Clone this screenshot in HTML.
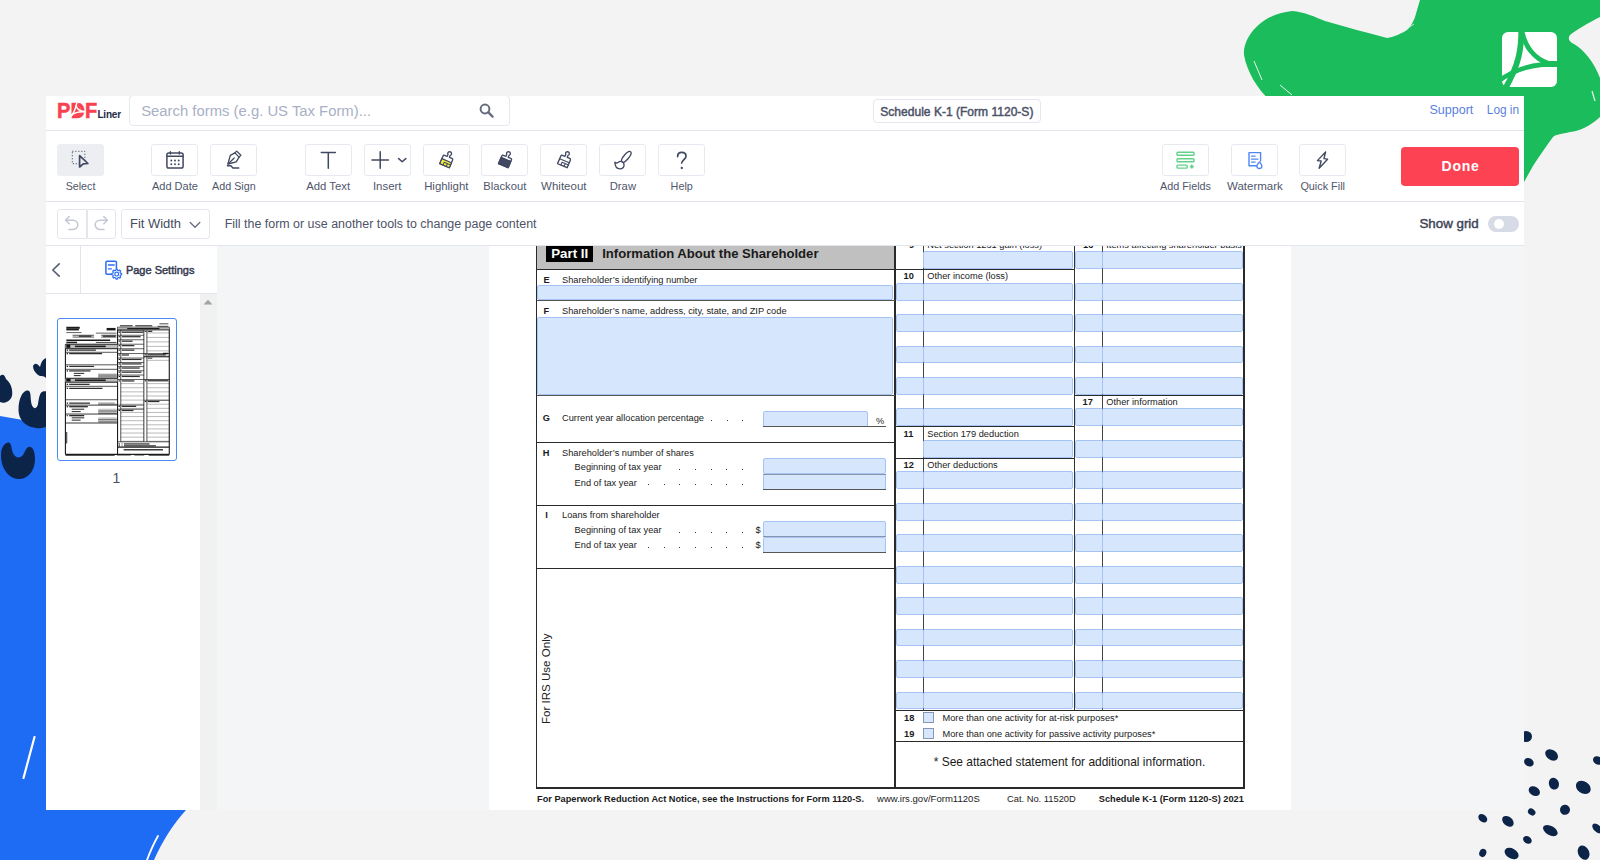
<!DOCTYPE html><html lang="en"><head><meta charset="utf-8"><title>Schedule K-1 (Form 1120-S) - PDFLiner</title><style>
*{box-sizing:border-box}
html,body{margin:0;padding:0}
body{width:1600px;height:860px;overflow:hidden;background:#f3f3f3;position:relative;font-family:"Liberation Sans",Arial,sans-serif;color:#3e4358}
.abs,.abs *{position:absolute}
.a{position:absolute}
#decor{position:absolute;left:0;top:0;width:1600px;height:860px}
#panel{position:absolute;left:46px;top:96px;width:1478px;height:714px;background:#fff;overflow:hidden}
.hl{position:absolute;height:1px;background:#e2e5ee}
.btn{position:absolute;top:144px;width:47px;height:32px;border:1px solid #e7e9f0;border-radius:3px;background:#fff}
.btn.sel{background:#eceef2;border-color:#eceef2}
.lbl{position:absolute;top:179px;width:80px;margin-left:-16.5px;text-align:center;font-size:11.1px;line-height:14px;color:#50566b;white-space:nowrap}
.sbtn{position:absolute;top:209px;height:30px;border:1px solid #e4e6ee;border-radius:3px;background:#fff}
svg{position:absolute;overflow:visible}
.t{position:absolute;white-space:nowrap;line-height:1}
.f{position:absolute;background:#d6e6fc;border:1px solid #a6c3f6;border-radius:2px}
.pl{position:absolute;background:#2a2a2a}
.pt{position:absolute;white-space:nowrap;line-height:1;color:#1a1a1a;font-size:9.25px}
.pb{font-weight:700}
.dot{position:absolute;width:1px;height:1px;background:#333}
</style></head><body>
<svg id="decor" width="1600" height="860" viewBox="0 0 1600 860">
<path fill="#1abc5b" d="M1420 0 L1600 0 L1600 17 C1588 23 1576 30 1570 35 C1567 39 1570 42 1574 44 C1584 50 1594 62 1600 78 L1600 117 C1590 126 1580 131 1570 132 C1562 134 1556 134 1553 137 C1545 148 1538 158 1533 166 L1524 182 L1270 182 L1270 100 C1258 90 1247 72 1244 55 C1243 36 1262 14 1292 11 C1305 12 1315 17 1325 21 C1346 27 1368 33 1387 38 C1395 37 1402 33 1407 30 C1412 25 1414 20 1415 17 Z"/>
<path d="M1254 61 L1262 80" stroke="#e9f7ee" stroke-width="1" fill="none"/>
<path d="M1280 85 L1292 95" stroke="#e9f7ee" stroke-width="1" fill="none"/>
<path d="M1592 91 L1595 101" stroke="#e9f7ee" stroke-width="1.2" fill="none"/>
<path d="M1405 30 L1414 24" stroke="#e9f7ee" stroke-width="0.8" fill="none"/>
<g><rect x="1502" y="32" width="55" height="55" rx="6" fill="#fff"/><path d="M1521.3 29 C1521.5 48 1519.5 64 1504.5 90" stroke="#1abc5b" stroke-width="5.8" fill="none"/><path d="M1522 32 C1525 45 1533 58 1548 63.3 L1560 63.8" stroke="#1abc5b" stroke-width="5" fill="none"/><path d="M1499 80.8 C1512 71 1527 66.2 1542 64.6 L1560 64.6" stroke="#1abc5b" stroke-width="4.6" fill="none"/></g>
<path fill="#1e6bf4" d="M0 416 L46 424 L46 810 L186 810 C173 824 162 842 154 860 L0 860 Z"/>
<path d="M34.5 737 L23.5 778" stroke="#fff" stroke-width="2.2" stroke-linecap="round" fill="none"/>
<path d="M158 836 C154 843 150 852 147 860" stroke="#fff" stroke-width="1.8" stroke-linecap="round" fill="none"/>
<path fill="#0c2448" d="M1 455 C1 447 5 442 9 442.5 C11.5 443 11 448 13 453 C15 458 20 459 23 455 C25 452 26 447.5 29 446.8 C33 446.5 35 452 35 459 C35 471 28 479 19 479 C9 479 1 469 1 455 Z"/>
<path fill="#0c2448" d="M18.5 410 C18.5 398 23 390 28 390.5 C31.5 391 30 398 31.5 404 C33 409.5 37 409.5 38 404 C39 398 39.5 392.5 43 391.5 C46 391 50 392 50 392 L50 424 C46 428 40 429 36 428 C26 427 18.5 420 18.5 410 Z"/>
<path fill="#0c2448" d="M0 376 C3 373 5 376 6 379 C11 383 13 390 12 396 C10 402 4 404 0 402 Z"/>
<path fill="#0c2448" d="M33 366 C35 362 38 364 40 367 C41 362 43 359 46 358 L50 358 L50 378 L46 378 C44 376 42 376 40 376 C36 374 33 370 33 366 Z"/>
<ellipse cx="1526" cy="736.5" rx="6" ry="5.5" fill="#0c2448" transform="rotate(0 1526 736.5)"/>
<ellipse cx="1551.6" cy="754.9" rx="7" ry="5" fill="#0c2448" transform="rotate(35 1551.6 754.9)"/>
<ellipse cx="1528.9" cy="762.3" rx="5" ry="4" fill="#0c2448" transform="rotate(30 1528.9 762.3)"/>
<ellipse cx="1597.8" cy="760.5" rx="5" ry="4" fill="#0c2448" transform="rotate(30 1597.8 760.5)"/>
<ellipse cx="1553.9" cy="783.7" rx="5" ry="6" fill="#0c2448" transform="rotate(-20 1553.9 783.7)"/>
<ellipse cx="1583.3" cy="787.4" rx="8" ry="6" fill="#0c2448" transform="rotate(35 1583.3 787.4)"/>
<ellipse cx="1534.3" cy="791.2" rx="6" ry="4.5" fill="#0c2448" transform="rotate(30 1534.3 791.2)"/>
<ellipse cx="1565" cy="809.8" rx="5" ry="5" fill="#0c2448" transform="rotate(40 1565 809.8)"/>
<ellipse cx="1531.7" cy="812" rx="4" ry="3.2" fill="#0c2448" transform="rotate(35 1531.7 812)"/>
<ellipse cx="1482.8" cy="818.3" rx="5" ry="3.6" fill="#0c2448" transform="rotate(40 1482.8 818.3)"/>
<ellipse cx="1507.9" cy="821.3" rx="6.5" ry="4.5" fill="#0c2448" transform="rotate(40 1507.9 821.3)"/>
<ellipse cx="1550.3" cy="830.6" rx="8" ry="4.6" fill="#0c2448" transform="rotate(30 1550.3 830.6)"/>
<ellipse cx="1597.2" cy="828.4" rx="6" ry="3.5" fill="#0c2448" transform="rotate(45 1597.2 828.4)"/>
<ellipse cx="1527.4" cy="839.9" rx="4.6" ry="3.6" fill="#0c2448" transform="rotate(35 1527.4 839.9)"/>
<ellipse cx="1482.8" cy="852.9" rx="3.5" ry="4.2" fill="#0c2448" transform="rotate(20 1482.8 852.9)"/>
<ellipse cx="1511.6" cy="853.5" rx="7.5" ry="5" fill="#0c2448" transform="rotate(30 1511.6 853.5)"/>
<ellipse cx="1583.6" cy="852.6" rx="5.5" ry="7.5" fill="#0c2448" transform="rotate(-25 1583.6 852.6)"/>
</svg>
<div id="panel"><div class="abs" style="left:-46px;top:-96px;width:1600px;height:860px">
<div class="hl" style="left:46px;top:130px;width:1478px"></div>
<div class="hl" style="left:46px;top:201px;width:1478px"></div>
<div class="hl" style="left:46px;top:245px;width:1478px"></div>
<div class="t" style="left:56.6px;top:99.6px;font-size:21.6px;font-weight:700;color:#f8414f;-webkit-text-stroke:0.55px #f8414f;letter-spacing:0.1px;transform:scaleX(0.925);transform-origin:0 0">PDF</div>
<svg style="left:0;top:0" width="200" height="130" viewBox="0 0 200 130"><path d="M73 105.5 H77.5 Q81 106.5 81 110.5 Q81 115 77.5 115.6 H73 Z" fill="#f8414f"/><path d="M76.9 102.5 C76 108 73.5 113.5 70 118.2" stroke="#fff" stroke-width="1.5" fill="none"/><path d="M75.6 105.6 C77.2 108.8 80.6 111.4 85 111.6" stroke="#fff" stroke-width="1.5" fill="none"/><path d="M70.8 115.3 C74.5 112.8 79.6 111.5 84.4 111.9" stroke="#fff" stroke-width="1.5" fill="none"/></svg>
<div class="t" style="left:97.4px;top:110.2px;font-size:10px;font-weight:700;color:#232b47;letter-spacing:-0.2px">Liner</div>
<div class="a" style="left:129px;top:95px;width:381px;height:31px;border:1px solid #e4e7f0;border-radius:4px;background:#fff"></div>
<div class="t" style="left:141.2px;top:104.2px;font-size:14.85px;color:#a9b0c6">Search forms (e.g. US Tax Form)...</div>
<svg style="left:479px;top:103px" width="15" height="15" viewBox="0 0 15 15"><circle cx="6" cy="6" r="4.4" fill="none" stroke="#646b7e" stroke-width="2"/><path d="M9.4 9.4 L13.6 13.6" stroke="#646b7e" stroke-width="2.2" stroke-linecap="round"/></svg>
<div class="a" style="left:873px;top:99px;width:168px;height:24px;border:1px solid #e4e7f0;border-radius:4px;background:#fff"></div>
<div class="t" style="left:880.3px;top:105.9px;font-size:12.05px;-webkit-text-stroke:0.45px #4b5168;color:#4b5168">Schedule K-1 (Form 1120-S)</div>
<div class="t" style="left:1429.5px;top:104px;font-size:12.5px;color:#5a7fdb">Support</div>
<div class="t" style="left:1486.8px;top:104.55px;font-size:11.85px;color:#5a7fdb">Log in</div>
<div class="btn sel" style="left:57px"></div><div class="lbl" style="left:57px;font-size:10.7px">Select</div>
<div class="btn" style="left:151.4px"></div><div class="lbl" style="left:151.4px;font-size:11.03px">Add Date</div>
<div class="btn" style="left:210.4px"></div><div class="lbl" style="left:210.4px;font-size:10.75px">Add Sign</div>
<div class="btn" style="left:304.7px"></div><div class="lbl" style="left:304.7px;font-size:11.3px">Add Text</div>
<div class="btn" style="left:363.7px"></div><div class="lbl" style="left:363.7px;font-size:11.4px">Insert</div>
<div class="btn" style="left:422.8px"></div><div class="lbl" style="left:422.8px;font-size:11.4px">Highlight</div>
<div class="btn" style="left:481.3px"></div><div class="lbl" style="left:481.3px;font-size:11.2px">Blackout</div>
<div class="btn" style="left:540.3px"></div><div class="lbl" style="left:540.3px;font-size:11.5px">Whiteout</div>
<div class="btn" style="left:599.4px"></div><div class="lbl" style="left:599.4px;font-size:11.25px">Draw</div>
<div class="btn" style="left:658.2px"></div><div class="lbl" style="left:658.2px;font-size:10.8px">Help</div>
<div class="btn" style="left:1162px"></div><div class="lbl" style="left:1162px;font-size:10.8px">Add Fields</div>
<div class="btn" style="left:1231.4px"></div><div class="lbl" style="left:1231.4px;font-size:11.5px">Watermark</div>
<div class="btn" style="left:1299.2px"></div><div class="lbl" style="left:1299.2px;font-size:10.85px">Quick Fill</div>
<svg style="left:0;top:0" width="1600" height="860" viewBox="0 0 1600 860" fill="none" stroke-linecap="round" stroke-linejoin="round">
<rect x="72.3" y="151.3" width="12.6" height="12.4" stroke="#414861" stroke-width="1" stroke-dasharray="1.1 1.9" stroke-linecap="butt"/>
<path d="M79.6 155.6 L79.6 167 L83.3 163.9 L87.9 163.5 Z" fill="#eceef2" stroke="#414861" stroke-width="1.7"/>
<rect x="166.9" y="152.9" width="16.2" height="15.2" rx="1.8" stroke="#414861" stroke-width="1.5"/>
<path d="M167 156.3 H183 M170.4 151.8 V154 M179.3 151.8 V154" stroke="#414861" stroke-width="1.4"/>
<circle cx="171.3" cy="160.5" r="0.95" fill="#414861" stroke="none"/>
<circle cx="171.3" cy="164.2" r="0.95" fill="#414861" stroke="none"/>
<circle cx="175" cy="160.5" r="0.95" fill="#414861" stroke="none"/>
<circle cx="175" cy="164.2" r="0.95" fill="#414861" stroke="none"/>
<circle cx="178.7" cy="160.5" r="0.95" fill="#414861" stroke="none"/>
<circle cx="178.7" cy="164.2" r="0.95" fill="#414861" stroke="none"/>
<path d="M227.9 164 L230.3 155.3 L234.9 152.9 L239.1 157.1 L236.2 161.8 Z" stroke="#414861" stroke-width="1.3"/>
<path d="M234.9 152.9 L236.7 151.1 L240.9 155.3 L239.1 157.1" stroke="#414861" stroke-width="1.3"/>
<path d="M228 164 L234.2 158" stroke="#414861" stroke-width="1.2"/>
<path d="M227.4 165.8 H230.9 L232.9 168 H238.8" stroke="#414861" stroke-width="1.4"/>
<path d="M321.3 152.5 H335.4 M328.3 152.5 V168.3" stroke="#414861" stroke-width="1.5"/>
<path d="M372 160 H388.4 M380.2 151.8 V168.3" stroke="#414861" stroke-width="1.5"/>
<path d="M398.6 158.6 L402.2 161.7 L405.8 158.6" stroke="#414861" stroke-width="1.5"/>
<g transform="translate(447.2 159.4) rotate(23)"><path d="M-1.2 -2.8 L-1.2 -4.8 A1.9 1.9 0 1 1 1.2 -4.8 L1.2 -2.8 L4 -2.8 Q5.2 -2.8 5.2 -1.6 L5.2 6.8 L-5.2 6.8 L-5.2 -1.6 Q-5.2 -2.8 -4 -2.8 Z" fill="#fff" stroke="#414861" stroke-width="1.35"/><rect x="-5.2" y="1.4" width="10.4" height="5.4" fill="#f3ee3e" stroke="#414861" stroke-width="1.2"/><path d="M-1.6 3.8 V6.4 M1.8 3.8 V6.4 M-1.6 3.8 H5" stroke="#414861" stroke-width="1"/></g>
<g transform="translate(506.0 159.4) rotate(23)"><path d="M-1.2 -2.8 L-1.2 -4.8 A1.9 1.9 0 1 1 1.2 -4.8 L1.2 -2.8 L4 -2.8 Q5.2 -2.8 5.2 -1.6 L5.2 6.8 L-5.2 6.8 L-5.2 -1.6 Q-5.2 -2.8 -4 -2.8 Z" fill="#fff" stroke="#414861" stroke-width="1.35"/><rect x="-5.2" y="0" width="10.4" height="6.8" fill="#414861" stroke="#414861" stroke-width="1.3"/></g>
<g transform="translate(565.0 159.4) rotate(23)"><path d="M-1.2 -2.8 L-1.2 -4.8 A1.9 1.9 0 1 1 1.2 -4.8 L1.2 -2.8 L4 -2.8 Q5.2 -2.8 5.2 -1.6 L5.2 6.8 L-5.2 6.8 L-5.2 -1.6 Q-5.2 -2.8 -4 -2.8 Z" fill="#fff" stroke="#414861" stroke-width="1.35"/><path d="M-5.2 1.4 H5.2 M-1.6 3.8 V6.6 M1.8 3.8 V6.6 M-1.6 3.8 H4.8" stroke="#414861" stroke-width="1.1"/></g>
<ellipse cx="626.3" cy="156.9" rx="2.5" ry="6.7" transform="rotate(40 626.3 156.9)" stroke="#414861" stroke-width="1.35" fill="#fff"/>
<path d="M614.9 162.3 C615 166.8 617.2 168.9 620 168.9 C622.8 168.9 624.4 166.6 624 164.3 C623.6 162 621.3 160.8 619.3 161.7 C617.8 162.5 616.6 164 614.9 162.3 Z" stroke="#414861" stroke-width="1.35" fill="#fff"/>
<path d="M677.6 156.6 C677.6 153.9 679.5 152.4 681.8 152.4 C684.3 152.4 686 154 686 156.2 C686 159 682 160 681.7 163" stroke="#414861" stroke-width="1.7"/>
<circle cx="681.8" cy="168" r="1.15" fill="#414861" stroke="none"/>
<rect x="1177" y="152.2" width="17" height="3" rx="0.8" stroke="#63d18b" stroke-width="1.4"/>
<rect x="1177" y="158.8" width="17" height="3" rx="0.8" stroke="#63d18b" stroke-width="1.4"/>
<rect x="1177" y="165.1" width="10.2" height="3" rx="0.8" stroke="#63d18b" stroke-width="1.4"/>
<path d="M1189.8 166.6 H1193.8 M1191.8 164.6 V168.6" stroke="#63d18b" stroke-width="1.6" stroke-linecap="butt"/>
<path d="M1256.5 165.8 H1249 V152.6 H1260.6 V161" stroke="#4f86f2" stroke-width="1.4"/>
<path d="M1251 156.2 H1255.6 M1251 159.2 H1258.4 M1251 162.1 H1255.6" stroke="#4f86f2" stroke-width="1.2" stroke-linecap="butt"/>
<path d="M1259.4 161.9 C1258.3 163.4 1256.9 164.6 1256.9 166 A2.5 2.5 0 0 0 1261.9 166 C1261.9 164.6 1260.5 163.4 1259.4 161.9 Z" stroke="#4f86f2" stroke-width="1.3" fill="#fff"/>
<path d="M1325.6 152 L1317.4 160.6 L1321.2 161 L1319.1 168.3 L1327.6 159.2 L1323.9 158.7 Z" stroke="#414861" stroke-width="1.35"/>
</svg>
<div class="a" style="left:1401px;top:147px;width:118px;height:39px;border-radius:4px;background:#fd4253"></div>
<div class="t" style="left:1441.6px;top:159px;font-size:14px;letter-spacing:0.7px;font-weight:700;color:#fff">Done</div>
<div class="sbtn" style="left:57px;width:30px;border-radius:3px 0 0 3px"></div>
<div class="sbtn" style="left:87px;width:29px;border-radius:0 3px 3px 0"></div>
<div class="sbtn" style="left:121px;width:89px"></div>
<svg style="left:63px;top:214px" width="18" height="18" viewBox="0 0 18 18"><path d="M6.2 2.6 L2.6 6.2 L6.2 9.8" fill="none" stroke="#c5c8d2" stroke-width="1.5" stroke-linecap="round" stroke-linejoin="round"/><path d="M3 6.2 H10.2 A4.6 4.6 0 0 1 10.2 15.4 H6" fill="none" stroke="#c5c8d2" stroke-width="1.5" stroke-linecap="round"/></svg>
<svg style="left:92px;top:214px" width="18" height="18" viewBox="0 0 18 18"><path d="M11.8 2.6 L15.4 6.2 L11.8 9.8" fill="none" stroke="#c5c8d2" stroke-width="1.5" stroke-linecap="round" stroke-linejoin="round"/><path d="M15 6.2 H7.8 A4.6 4.6 0 0 0 7.8 15.4 H12" fill="none" stroke="#c5c8d2" stroke-width="1.5" stroke-linecap="round"/></svg>
<div class="t" style="left:130px;top:217.7px;font-size:12.95px;color:#454b60">Fit Width</div>
<svg style="left:189px;top:221px" width="12" height="8" viewBox="0 0 12 8"><path d="M1.2 1.5 L6 6.2 L10.8 1.5" fill="none" stroke="#6a7083" stroke-width="1.4" stroke-linecap="round" stroke-linejoin="round"/></svg>
<div class="t" style="left:224.7px;top:217.5px;font-size:12.45px;color:#4d5368">Fill the form or use another tools to change page content</div>
<div class="t" style="left:1419.4px;top:217.2px;font-size:13.35px;-webkit-text-stroke:0.45px #3e4358;color:#3e4358">Show grid</div>
<div class="a" style="left:1488px;top:216px;width:31px;height:16px;border-radius:8px;background:#d6dbe6"></div>
<div class="a" style="left:1493.5px;top:219px;width:10px;height:10px;border-radius:5px;background:#fff"></div>
<div class="a" style="left:46px;top:246px;width:171px;height:47px;background:#fff"></div>
<div class="hl" style="left:46px;top:293px;width:171px"></div>
<div class="a" style="left:80px;top:246px;width:1px;height:47px;background:#e2e5ee"></div>
<svg style="left:50px;top:262px" width="12" height="16" viewBox="0 0 12 16"><path d="M9.2 1.8 L2.8 8 L9.2 14.2" fill="none" stroke="#5a6076" stroke-width="1.7" stroke-linecap="round" stroke-linejoin="round"/></svg>
<svg style="left:0;top:0" width="1600" height="860" viewBox="0 0 1600 860" fill="none" stroke-linecap="round" stroke-linejoin="round">
<path d="M112 274.2 H107 Q105.9 274.2 105.9 273.1 V262.3 Q105.9 261.2 107 261.2 H115.3 Q116.4 261.2 116.4 262.3 V268.3" stroke="#2c6df4" stroke-width="1.5"/>
<path d="M108.4 265 H114.2 M108.4 268.8 H111.4" stroke="#2c6df4" stroke-width="1.3"/>
<path d="M121.66 273.45 L121.66 274.75 L120.47 275.11 L120.08 276.05 L120.66 277.15 L119.75 278.06 L118.65 277.48 L117.71 277.87 L117.35 279.06 L116.05 279.06 L115.69 277.87 L114.75 277.48 L113.65 278.06 L112.74 277.15 L113.32 276.05 L112.93 275.11 L111.74 274.75 L111.74 273.45 L112.93 273.09 L113.32 272.15 L112.74 271.05 L113.65 270.14 L114.75 270.72 L115.69 270.33 L116.05 269.14 L117.35 269.14 L117.71 270.33 L118.65 270.72 L119.75 270.14 L120.66 271.05 L120.08 272.15 L120.47 273.09 Z" fill="#fff" stroke="#2c6df4" stroke-width="1.2"/>
<circle cx="116.7" cy="274.1" r="1.9" stroke="#2c6df4" stroke-width="1.2" fill="#fff"/>
</svg>
<div class="t" style="left:125.9px;top:265.2px;font-size:11px;-webkit-text-stroke:0.45px #33394f;color:#33394f">Page Settings</div>
<div class="a" style="left:200px;top:294px;width:17px;height:516px;background:#f1f1f1"></div>
<svg style="left:203px;top:299px" width="10" height="6" viewBox="0 0 10 6"><path d="M0.5 5.5 L5 0.8 L9.5 5.5 Z" fill="#a3a3a3"/></svg>
<div class="a" style="left:57px;top:317.5px;width:119.5px;height:143px;border:1.7px solid #4a8bf5;border-radius:3px;background:#fff"></div>
<svg style="left:0;top:0;opacity:1" width="300" height="500" viewBox="0 0 300 500" fill="none">
<path d="M65.43 344.23 L65.43 454.35" stroke="#1c1c1c" stroke-width="1.12" opacity="1.00"/>
<path d="M169.28 327.22 L169.28 454.35" stroke="#1c1c1c" stroke-width="1.12" opacity="1.00"/>
<path d="M65.43 454.35 L169.28 454.35" stroke="#1c1c1c" stroke-width="1.25" opacity="1.00"/>
<path d="M117.53 327.22 L117.53 454.35" stroke="#1c1c1c" stroke-width="1.12" opacity="1.00"/>
<path d="M120.76 329.91 L120.76 441.81" stroke="#1c1c1c" stroke-width="0.75" opacity="1.00"/>
<path d="M143.85 329.91 L143.85 441.81" stroke="#1c1c1c" stroke-width="0.88" opacity="1.00"/>
<path d="M146.90 329.91 L146.90 441.81" stroke="#1c1c1c" stroke-width="0.75" opacity="1.00"/>
<path d="M117.53 327.22 L169.28 327.22" stroke="#1c1c1c" stroke-width="1.12" opacity="1.00"/>
<rect x="117.53" y="327.40" width="51.75" height="2.51" fill="#b5b5b5" opacity="1"/>
<path d="M127.20 328.65 L159.43 328.65" stroke="#1c1c1c" stroke-width="1.25" opacity="1.00"/>
<path d="M117.53 329.91 L169.28 329.91" stroke="#1c1c1c" stroke-width="0.88" opacity="1.00"/>
<path d="M159.43 323.82 L168.38 323.82" stroke="#1c1c1c" stroke-width="1.00" opacity="0.80"/>
<path d="M120.04 325.79 L132.57 325.79" stroke="#1c1c1c" stroke-width="1.12" opacity="0.92"/>
<path d="M135.26 325.79 L152.27 325.79" stroke="#1c1c1c" stroke-width="1.12" opacity="0.92"/>
<path d="M157.64 326.32 L168.38 326.32" stroke="#1c1c1c" stroke-width="1.00" opacity="0.80"/>
<path d="M66.32 327.76 L79.75 327.76" stroke="#1c1c1c" stroke-width="2.00" opacity="1.00"/>
<path d="M66.32 329.55 L78.86 329.55" stroke="#1c1c1c" stroke-width="1.75" opacity="1.00"/>
<path d="M106.61 329.19 L115.56 329.19" stroke="#1c1c1c" stroke-width="2.50" opacity="1.00"/>
<path d="M66.32 332.59 L81.54 332.59" stroke="#1c1c1c" stroke-width="1.00" opacity="0.69"/>
<path d="M95.87 333.13 L116.46 333.13" stroke="#1c1c1c" stroke-width="1.00" opacity="0.69"/>
<path d="M72.59 335.28 L94.08 335.28" stroke="#1c1c1c" stroke-width="0.75" opacity="1.00"/>
<path d="M72.59 337.07 L94.08 337.07" stroke="#1c1c1c" stroke-width="0.75" opacity="1.00"/>
<path d="M78.86 336.17 L91.39 336.17" stroke="#1c1c1c" stroke-width="1.25" opacity="0.92"/>
<path d="M101.24 335.28 L116.46 335.28" stroke="#1c1c1c" stroke-width="0.75" opacity="1.00"/>
<path d="M101.24 337.07 L116.46 337.07" stroke="#1c1c1c" stroke-width="0.75" opacity="1.00"/>
<path d="M103.03 336.17 L115.56 336.17" stroke="#1c1c1c" stroke-width="1.25" opacity="0.92"/>
<path d="M66.32 340.29 L110.19 340.29" stroke="#1c1c1c" stroke-width="1.62" opacity="1.00"/>
<path d="M66.32 342.44 L77.07 342.44" stroke="#1c1c1c" stroke-width="1.50" opacity="1.00"/>
<path d="M95.87 342.44 L116.46 342.44" stroke="#1c1c1c" stroke-width="1.00" opacity="0.80"/>
<rect x="65.43" y="344.23" width="52.10" height="4.48" fill="#bdbdbd" opacity="1"/>
<rect x="66.32" y="344.59" width="3.94" height="3.22" fill="#111" opacity="1"/>
<path d="M74.92 346.38 L105.72 346.38" stroke="#1c1c1c" stroke-width="1.62" opacity="1.00"/>
<path d="M65.43 344.23 L117.53 344.23" stroke="#1c1c1c" stroke-width="1.00" opacity="1.00"/>
<path d="M65.43 348.71 L117.53 348.71" stroke="#1c1c1c" stroke-width="1.00" opacity="1.00"/>
<path d="M66.68 350.14 L68.11 350.14" stroke="#1c1c1c" stroke-width="1.25" opacity="1.00"/>
<path d="M69.19 350.14 L95.87 350.14" stroke="#1c1c1c" stroke-width="1.25" opacity="0.92"/>
<path d="M65.43 352.29 L117.53 352.29" stroke="#1c1c1c" stroke-width="0.75" opacity="1.00"/>
<path d="M66.68 353.72 L68.11 353.72" stroke="#1c1c1c" stroke-width="1.25" opacity="1.00"/>
<path d="M69.19 353.72 L102.13 353.72" stroke="#1c1c1c" stroke-width="1.25" opacity="0.92"/>
<path d="M65.43 364.82 L117.53 364.82" stroke="#1c1c1c" stroke-width="0.75" opacity="1.00"/>
<path d="M66.68 366.43 L68.11 366.43" stroke="#1c1c1c" stroke-width="1.25" opacity="1.00"/>
<path d="M69.19 366.43 L94.08 366.43" stroke="#1c1c1c" stroke-width="1.25" opacity="0.92"/>
<path d="M65.43 369.30 L117.53 369.30" stroke="#1c1c1c" stroke-width="0.75" opacity="1.00"/>
<path d="M66.68 370.91 L68.11 370.91" stroke="#1c1c1c" stroke-width="1.25" opacity="1.00"/>
<path d="M69.19 370.91 L90.50 370.91" stroke="#1c1c1c" stroke-width="1.25" opacity="0.92"/>
<path d="M73.84 373.41 L84.23 373.41" stroke="#1c1c1c" stroke-width="1.12" opacity="0.86"/>
<path d="M73.84 375.56 L80.65 375.56" stroke="#1c1c1c" stroke-width="1.12" opacity="0.86"/>
<rect x="98.20" y="373.41" width="18.62" height="1.61" fill="#c9c9c9" opacity="1"/>
<rect x="98.20" y="375.38" width="18.62" height="1.61" fill="#c9c9c9" opacity="1"/>
<path d="M98.20 375.12 L116.82 375.12" stroke="#1c1c1c" stroke-width="0.62" opacity="1.00"/>
<path d="M98.20 377.00 L116.82 377.00" stroke="#1c1c1c" stroke-width="0.62" opacity="1.00"/>
<rect x="65.43" y="378.25" width="52.10" height="3.94" fill="#bdbdbd" opacity="1"/>
<rect x="66.32" y="378.61" width="4.30" height="2.86" fill="#111" opacity="1"/>
<path d="M74.92 380.22 L105.72 380.22" stroke="#1c1c1c" stroke-width="1.62" opacity="1.00"/>
<path d="M65.43 378.25 L117.53 378.25" stroke="#1c1c1c" stroke-width="1.00" opacity="1.00"/>
<path d="M65.43 382.19 L117.53 382.19" stroke="#1c1c1c" stroke-width="1.00" opacity="1.00"/>
<path d="M66.68 384.34 L68.11 384.34" stroke="#1c1c1c" stroke-width="1.25" opacity="1.00"/>
<path d="M69.19 384.34 L89.60 384.34" stroke="#1c1c1c" stroke-width="1.25" opacity="0.92"/>
<path d="M65.43 386.31 L117.53 386.31" stroke="#1c1c1c" stroke-width="0.75" opacity="1.00"/>
<path d="M66.68 388.28 L68.11 388.28" stroke="#1c1c1c" stroke-width="1.25" opacity="1.00"/>
<path d="M69.19 388.28 L102.49 388.28" stroke="#1c1c1c" stroke-width="1.25" opacity="0.92"/>
<path d="M65.43 399.74 L117.53 399.74" stroke="#1c1c1c" stroke-width="0.75" opacity="1.00"/>
<path d="M66.68 403.14 L68.11 403.14" stroke="#1c1c1c" stroke-width="1.25" opacity="1.00"/>
<path d="M69.19 403.14 L89.96 403.14" stroke="#1c1c1c" stroke-width="1.25" opacity="0.92"/>
<rect x="98.20" y="402.06" width="16.47" height="2.15" fill="#c9c9c9" opacity="1"/>
<path d="M98.20 404.21 L116.82 404.21" stroke="#1c1c1c" stroke-width="0.62" opacity="1.00"/>
<path d="M65.43 405.11 L117.53 405.11" stroke="#1c1c1c" stroke-width="0.88" opacity="1.00"/>
<path d="M66.68 406.72 L68.11 406.72" stroke="#1c1c1c" stroke-width="1.25" opacity="1.00"/>
<path d="M69.19 406.72 L87.81 406.72" stroke="#1c1c1c" stroke-width="1.25" opacity="0.98"/>
<path d="M71.70 409.22 L84.23 409.22" stroke="#1c1c1c" stroke-width="1.12" opacity="0.86"/>
<path d="M71.70 411.55 L80.65 411.55" stroke="#1c1c1c" stroke-width="1.12" opacity="0.86"/>
<rect x="98.20" y="408.69" width="18.62" height="2.15" fill="#c9c9c9" opacity="1"/>
<rect x="98.20" y="411.19" width="18.62" height="2.15" fill="#c9c9c9" opacity="1"/>
<path d="M98.20 411.02 L116.82 411.02" stroke="#1c1c1c" stroke-width="0.62" opacity="1.00"/>
<path d="M98.20 413.34 L116.82 413.34" stroke="#1c1c1c" stroke-width="0.62" opacity="1.00"/>
<path d="M65.43 414.06 L117.53 414.06" stroke="#1c1c1c" stroke-width="0.88" opacity="1.00"/>
<path d="M66.68 415.67 L67.76 415.67" stroke="#1c1c1c" stroke-width="1.25" opacity="1.00"/>
<path d="M69.19 415.67 L84.23 415.67" stroke="#1c1c1c" stroke-width="1.25" opacity="0.98"/>
<path d="M71.70 417.82 L84.23 417.82" stroke="#1c1c1c" stroke-width="1.12" opacity="0.86"/>
<path d="M71.70 420.15 L80.65 420.15" stroke="#1c1c1c" stroke-width="1.12" opacity="0.86"/>
<rect x="98.20" y="417.28" width="18.62" height="2.15" fill="#c9c9c9" opacity="1"/>
<rect x="98.20" y="419.79" width="18.62" height="2.15" fill="#c9c9c9" opacity="1"/>
<path d="M98.20 419.61 L116.82 419.61" stroke="#1c1c1c" stroke-width="0.62" opacity="1.00"/>
<path d="M98.20 421.94 L116.82 421.94" stroke="#1c1c1c" stroke-width="0.62" opacity="1.00"/>
<path d="M65.43 423.01 L117.53 423.01" stroke="#1c1c1c" stroke-width="0.88" opacity="1.00"/>
<path d="M66.68 431.96 L66.68 443.60" stroke="#1c1c1c" stroke-width="1.12" opacity="0.80"/>
<path d="M117.53 330.80 L143.85 330.80" stroke="#1c1c1c" stroke-width="0.69" opacity="1.00"/>
<path d="M118.61 332.23 L120.04 332.23" stroke="#1c1c1c" stroke-width="1.12" opacity="0.98"/>
<path d="M121.83 332.23 L143.32 332.23" stroke="#1c1c1c" stroke-width="1.25" opacity="0.92"/>
<path d="M117.53 335.28 L143.85 335.28" stroke="#1c1c1c" stroke-width="0.69" opacity="1.00"/>
<path d="M118.61 336.71 L120.04 336.71" stroke="#1c1c1c" stroke-width="1.12" opacity="0.98"/>
<path d="M121.83 336.71 L140.63 336.71" stroke="#1c1c1c" stroke-width="1.25" opacity="0.92"/>
<path d="M117.53 339.75 L143.85 339.75" stroke="#1c1c1c" stroke-width="0.69" opacity="1.00"/>
<path d="M118.61 341.19 L120.04 341.19" stroke="#1c1c1c" stroke-width="1.12" opacity="0.98"/>
<path d="M121.83 341.19 L132.57 341.19" stroke="#1c1c1c" stroke-width="1.25" opacity="0.92"/>
<path d="M117.53 344.23 L143.85 344.23" stroke="#1c1c1c" stroke-width="0.69" opacity="1.00"/>
<path d="M118.61 345.66 L120.04 345.66" stroke="#1c1c1c" stroke-width="1.12" opacity="0.98"/>
<path d="M121.83 345.66 L134.36 345.66" stroke="#1c1c1c" stroke-width="1.25" opacity="0.92"/>
<path d="M117.53 348.71 L143.85 348.71" stroke="#1c1c1c" stroke-width="0.69" opacity="1.00"/>
<path d="M118.61 350.14 L120.04 350.14" stroke="#1c1c1c" stroke-width="1.12" opacity="0.98"/>
<path d="M121.83 350.14 L134.36 350.14" stroke="#1c1c1c" stroke-width="1.25" opacity="0.92"/>
<path d="M117.53 353.54 L143.85 353.54" stroke="#1c1c1c" stroke-width="0.69" opacity="1.00"/>
<path d="M118.61 354.97 L120.04 354.97" stroke="#1c1c1c" stroke-width="1.12" opacity="0.98"/>
<path d="M121.83 354.97 L128.99 354.97" stroke="#1c1c1c" stroke-width="1.25" opacity="0.92"/>
<path d="M117.53 358.02 L143.85 358.02" stroke="#1c1c1c" stroke-width="0.69" opacity="1.00"/>
<path d="M118.61 359.45 L120.04 359.45" stroke="#1c1c1c" stroke-width="1.12" opacity="0.98"/>
<path d="M121.83 359.45 L141.53 359.45" stroke="#1c1c1c" stroke-width="1.25" opacity="0.92"/>
<path d="M117.53 362.49 L143.85 362.49" stroke="#1c1c1c" stroke-width="0.69" opacity="1.00"/>
<path d="M118.61 363.92 L120.04 363.92" stroke="#1c1c1c" stroke-width="1.12" opacity="0.98"/>
<path d="M121.83 363.92 L141.53 363.92" stroke="#1c1c1c" stroke-width="1.25" opacity="0.92"/>
<path d="M117.53 366.61 L143.85 366.61" stroke="#1c1c1c" stroke-width="0.69" opacity="1.00"/>
<path d="M118.61 368.04 L120.04 368.04" stroke="#1c1c1c" stroke-width="1.12" opacity="0.98"/>
<path d="M121.83 368.04 L139.74 368.04" stroke="#1c1c1c" stroke-width="1.25" opacity="0.92"/>
<path d="M117.53 370.73 L143.85 370.73" stroke="#1c1c1c" stroke-width="0.69" opacity="1.00"/>
<path d="M118.61 372.16 L120.04 372.16" stroke="#1c1c1c" stroke-width="1.12" opacity="0.98"/>
<path d="M121.83 372.16 L141.53 372.16" stroke="#1c1c1c" stroke-width="1.25" opacity="0.92"/>
<path d="M117.53 375.03 L143.85 375.03" stroke="#1c1c1c" stroke-width="0.69" opacity="1.00"/>
<path d="M118.61 376.46 L120.04 376.46" stroke="#1c1c1c" stroke-width="1.12" opacity="0.98"/>
<path d="M121.83 376.46 L139.74 376.46" stroke="#1c1c1c" stroke-width="1.25" opacity="0.92"/>
<path d="M117.53 379.50 L143.85 379.50" stroke="#1c1c1c" stroke-width="0.69" opacity="1.00"/>
<path d="M118.61 380.93 L120.04 380.93" stroke="#1c1c1c" stroke-width="1.12" opacity="0.98"/>
<path d="M121.83 380.93 L134.36 380.93" stroke="#1c1c1c" stroke-width="1.25" opacity="0.92"/>
<path d="M120.76 383.62 L143.85 383.62" stroke="#1c1c1c" stroke-width="0.44" opacity="0.69"/>
<path d="M146.90 383.62 L169.28 383.62" stroke="#1c1c1c" stroke-width="0.44" opacity="0.69"/>
<path d="M120.76 387.74 L143.85 387.74" stroke="#1c1c1c" stroke-width="0.44" opacity="0.69"/>
<path d="M146.90 387.74 L169.28 387.74" stroke="#1c1c1c" stroke-width="0.44" opacity="0.69"/>
<path d="M120.76 391.86 L143.85 391.86" stroke="#1c1c1c" stroke-width="0.44" opacity="0.69"/>
<path d="M146.90 391.86 L169.28 391.86" stroke="#1c1c1c" stroke-width="0.44" opacity="0.69"/>
<path d="M120.76 395.97 L143.85 395.97" stroke="#1c1c1c" stroke-width="0.44" opacity="0.69"/>
<path d="M146.90 395.97 L169.28 395.97" stroke="#1c1c1c" stroke-width="0.44" opacity="0.69"/>
<path d="M120.76 400.09 L143.85 400.09" stroke="#1c1c1c" stroke-width="0.44" opacity="0.69"/>
<path d="M146.90 400.09 L169.28 400.09" stroke="#1c1c1c" stroke-width="0.44" opacity="0.69"/>
<path d="M120.76 404.21 L143.85 404.21" stroke="#1c1c1c" stroke-width="0.44" opacity="0.69"/>
<path d="M146.90 404.21 L169.28 404.21" stroke="#1c1c1c" stroke-width="0.44" opacity="0.69"/>
<path d="M120.76 408.33 L143.85 408.33" stroke="#1c1c1c" stroke-width="0.44" opacity="0.69"/>
<path d="M146.90 408.33 L169.28 408.33" stroke="#1c1c1c" stroke-width="0.44" opacity="0.69"/>
<path d="M120.76 412.45 L143.85 412.45" stroke="#1c1c1c" stroke-width="0.44" opacity="0.69"/>
<path d="M146.90 412.45 L169.28 412.45" stroke="#1c1c1c" stroke-width="0.44" opacity="0.69"/>
<path d="M120.76 416.57 L143.85 416.57" stroke="#1c1c1c" stroke-width="0.44" opacity="0.69"/>
<path d="M146.90 416.57 L169.28 416.57" stroke="#1c1c1c" stroke-width="0.44" opacity="0.69"/>
<path d="M120.76 420.68 L143.85 420.68" stroke="#1c1c1c" stroke-width="0.44" opacity="0.69"/>
<path d="M146.90 420.68 L169.28 420.68" stroke="#1c1c1c" stroke-width="0.44" opacity="0.69"/>
<path d="M120.76 424.80 L143.85 424.80" stroke="#1c1c1c" stroke-width="0.44" opacity="0.69"/>
<path d="M146.90 424.80 L169.28 424.80" stroke="#1c1c1c" stroke-width="0.44" opacity="0.69"/>
<path d="M120.76 428.92 L143.85 428.92" stroke="#1c1c1c" stroke-width="0.44" opacity="0.69"/>
<path d="M146.90 428.92 L169.28 428.92" stroke="#1c1c1c" stroke-width="0.44" opacity="0.69"/>
<path d="M120.76 433.04 L143.85 433.04" stroke="#1c1c1c" stroke-width="0.44" opacity="0.69"/>
<path d="M146.90 433.04 L169.28 433.04" stroke="#1c1c1c" stroke-width="0.44" opacity="0.69"/>
<path d="M120.76 437.16 L143.85 437.16" stroke="#1c1c1c" stroke-width="0.44" opacity="0.69"/>
<path d="M146.90 437.16 L169.28 437.16" stroke="#1c1c1c" stroke-width="0.44" opacity="0.69"/>
<path d="M120.76 441.27 L143.85 441.27" stroke="#1c1c1c" stroke-width="0.44" opacity="0.69"/>
<path d="M146.90 441.27 L169.28 441.27" stroke="#1c1c1c" stroke-width="0.44" opacity="0.69"/>
<path d="M146.90 332.95 L169.28 332.95" stroke="#1c1c1c" stroke-width="0.44" opacity="0.69"/>
<path d="M146.90 337.43 L169.28 337.43" stroke="#1c1c1c" stroke-width="0.44" opacity="0.69"/>
<path d="M146.90 341.90 L169.28 341.90" stroke="#1c1c1c" stroke-width="0.44" opacity="0.69"/>
<path d="M146.90 346.38 L169.28 346.38" stroke="#1c1c1c" stroke-width="0.44" opacity="0.69"/>
<path d="M146.90 350.85 L169.28 350.85" stroke="#1c1c1c" stroke-width="0.44" opacity="0.69"/>
<path d="M146.90 355.87 L169.28 355.87" stroke="#1c1c1c" stroke-width="0.44" opacity="0.69"/>
<path d="M146.90 360.34 L169.28 360.34" stroke="#1c1c1c" stroke-width="0.44" opacity="0.69"/>
<path d="M117.53 405.11 L143.85 405.11" stroke="#1c1c1c" stroke-width="0.69" opacity="1.00"/>
<path d="M118.61 406.36 L120.04 406.36" stroke="#1c1c1c" stroke-width="1.12" opacity="0.98"/>
<path d="M121.83 406.36 L136.15 406.36" stroke="#1c1c1c" stroke-width="1.25" opacity="0.92"/>
<path d="M117.53 409.22 L143.85 409.22" stroke="#1c1c1c" stroke-width="0.69" opacity="1.00"/>
<path d="M118.61 410.48 L120.04 410.48" stroke="#1c1c1c" stroke-width="1.12" opacity="0.98"/>
<path d="M121.83 410.48 L133.47 410.48" stroke="#1c1c1c" stroke-width="1.25" opacity="0.92"/>
<path d="M144.75 331.34 L146.36 331.34" stroke="#1c1c1c" stroke-width="1.12" opacity="0.98"/>
<path d="M147.79 331.34 L152.27 331.34" stroke="#1c1c1c" stroke-width="1.25" opacity="0.92"/>
<path d="M143.85 353.54 L169.28 353.54" stroke="#1c1c1c" stroke-width="0.69" opacity="1.00"/>
<path d="M144.75 354.79 L146.36 354.79" stroke="#1c1c1c" stroke-width="1.12" opacity="0.98"/>
<path d="M147.79 354.79 L165.70 354.79" stroke="#1c1c1c" stroke-width="1.25" opacity="0.92"/>
<path d="M163.01 353.54 L168.38 353.54" stroke="#1c1c1c" stroke-width="1.50" opacity="1.00"/>
<path d="M143.85 356.76 L169.28 356.76" stroke="#1c1c1c" stroke-width="1.12" opacity="1.00"/>
<path d="M147.79 358.20 L152.27 358.20" stroke="#1c1c1c" stroke-width="1.12" opacity="0.80"/>
<path d="M143.85 379.50 L169.28 379.50" stroke="#1c1c1c" stroke-width="0.75" opacity="1.00"/>
<path d="M144.75 380.76 L146.36 380.76" stroke="#1c1c1c" stroke-width="1.12" opacity="0.98"/>
<path d="M147.79 380.76 L168.38 380.76" stroke="#1c1c1c" stroke-width="1.25" opacity="0.92"/>
<path d="M143.85 400.27 L169.28 400.27" stroke="#1c1c1c" stroke-width="0.69" opacity="1.00"/>
<path d="M144.75 401.53 L146.36 401.53" stroke="#1c1c1c" stroke-width="1.12" opacity="0.98"/>
<path d="M147.79 401.53 L159.43 401.53" stroke="#1c1c1c" stroke-width="1.25" opacity="0.92"/>
<path d="M117.53 441.81 L169.28 441.81" stroke="#1c1c1c" stroke-width="0.75" opacity="1.00"/>
<path d="M118.61 443.96 L120.04 443.96" stroke="#1c1c1c" stroke-width="1.12" opacity="0.98"/>
<rect x="121.29" y="442.89" width="1.79" height="1.79" fill="#bbb" opacity="1"/>
<path d="M123.98 443.96 L149.58 443.96" stroke="#1c1c1c" stroke-width="1.25" opacity="0.92"/>
<path d="M118.61 445.93 L120.04 445.93" stroke="#1c1c1c" stroke-width="1.12" opacity="0.98"/>
<rect x="121.29" y="445.03" width="1.79" height="1.61" fill="#bbb" opacity="1"/>
<path d="M123.98 445.93 L155.85 445.93" stroke="#1c1c1c" stroke-width="1.25" opacity="0.92"/>
<path d="M117.53 447.18 L169.28 447.18" stroke="#1c1c1c" stroke-width="1.12" opacity="1.00"/>
<path d="M123.62 449.69 L163.01 449.69" stroke="#1c1c1c" stroke-width="1.38" opacity="0.86"/>
<path d="M65.43 455.06 L114.67 455.06" stroke="#1c1c1c" stroke-width="1.25" opacity="0.98"/>
<path d="M116.82 455.06 L130.78 455.06" stroke="#1c1c1c" stroke-width="1.00" opacity="0.80"/>
<path d="M134.36 455.06 L144.21 455.06" stroke="#1c1c1c" stroke-width="1.00" opacity="0.80"/>
<path d="M148.69 455.06 L169.28 455.06" stroke="#1c1c1c" stroke-width="1.25" opacity="0.98"/>
</svg>
<div class="t" style="left:111.5px;top:470.5px;font-size:14px;color:#4a5066;width:10px;text-align:center">1</div>
<div class="a" style="left:217px;top:246px;width:1307px;height:564px;background:#f4f5f7"></div>
<div class="a" style="left:489px;top:246px;width:802px;height:564px;background:#fff"></div>
<div class="a" id="pdf" style="left:0;top:246px;width:1600px;height:564px;overflow:hidden"><div class="abs" style="left:0;top:-246px;width:1600px;height:860px">
<div class="a" style="left:537px;top:240px;width:358px;height:29px;background:#c0c0c0"></div>
<div class="a" style="left:546px;top:240px;width:47px;height:21.5px;background:#000"></div>
<div class="pt pb" style="left:551.2px;top:247.15px;font-size:13.3px;color:#fff">Part II</div>
<div class="pt pb" style="left:602.2px;top:247.25px;font-size:13.1px;">Information About the Shareholder</div>
<div class="pt pb" style="left:909px;top:240.68px;font-size:9.25px;">9</div>
<div class="pt" style="left:927.3px;top:240.68px;font-size:9.25px;">Net section 1231 gain (loss)</div>
<div class="pt pb" style="left:1083px;top:240.68px;font-size:9.25px;">16</div>
<div class="pt" style="left:1106.3px;top:240.68px;font-size:9.25px;">Items affecting shareholder basis</div>
<div class="pt pb" style="left:903.6px;top:271.68px;font-size:9.25px;">10</div>
<div class="pt" style="left:927.3px;top:271.68px;font-size:9.25px;">Other income (loss)</div>
<div class="pt pb" style="left:1082.6px;top:397.68px;font-size:9.25px;">17</div>
<div class="pt" style="left:1106.3px;top:397.68px;font-size:9.25px;">Other information</div>
<div class="pt pb" style="left:903.6px;top:429.68px;font-size:9.25px;">11</div>
<div class="pt" style="left:927.3px;top:429.68px;font-size:9.25px;">Section 179 deduction</div>
<div class="pt pb" style="left:903.6px;top:460.68px;font-size:9.25px;">12</div>
<div class="pt" style="left:927.3px;top:460.68px;font-size:9.25px;">Other deductions</div>
<div class="pl" style="left:535.90px;top:240px;width:1.4px;height:548px;background:#2a2a2a"></div>
<div class="pl" style="left:894.40px;top:240px;width:1.6px;height:548px;background:#2a2a2a"></div>
<div class="pl" style="left:1243.30px;top:240px;width:1.4px;height:548px;background:#2a2a2a"></div>
<div class="pl" style="left:923.05px;top:240px;width:0.9px;height:470px;background:#444"></div>
<div class="pl" style="left:1073.85px;top:240px;width:1.1px;height:470px;background:#333"></div>
<div class="pl" style="left:1102.15px;top:240px;width:0.9px;height:470px;background:#444"></div>
<div class="pl" style="left:536px;top:268.65px;width:359px;height:1.3px;background:#2a2a2a"></div>
<div class="pl" style="left:895px;top:268.80px;width:179.4000000000001px;height:1.2px;background:#2a2a2a"></div>
<div class="pl" style="left:1074.4px;top:394.70px;width:169.5999999999999px;height:1.0px;background:#2a2a2a"></div>
<div class="pl" style="left:895px;top:425.90px;width:179.4000000000001px;height:1.0px;background:#2a2a2a"></div>
<div class="pl" style="left:895px;top:457.50px;width:179.4000000000001px;height:1.0px;background:#2a2a2a"></div>
<div class="pl" style="left:895px;top:709.70px;width:349px;height:1.0px;background:#2a2a2a"></div>
<div class="pl" style="left:895px;top:740.55px;width:349px;height:1.5px;background:#2a2a2a"></div>
<div class="pl" style="left:536px;top:787.00px;width:708.7px;height:1.6px;background:#2a2a2a"></div>
<div class="pl" style="left:537px;top:300.35px;width:358px;height:0.9px;background:#555"></div>
<div class="pl" style="left:537px;top:394.95px;width:358px;height:0.9px;background:#555"></div>
<div class="pl" style="left:537px;top:442.00px;width:358px;height:1.0px;background:#2a2a2a"></div>
<div class="pl" style="left:537px;top:504.50px;width:358px;height:1.0px;background:#2a2a2a"></div>
<div class="pl" style="left:537px;top:567.50px;width:358px;height:1.0px;background:#2a2a2a"></div>
<div class="f" style="left:923.2px;top:251.2px;width:149.50px;height:17.90px"></div>
<div class="f" style="left:1074.9px;top:251.2px;width:28.10px;height:17.90px"></div>
<div class="f" style="left:1102.3px;top:251.2px;width:140.40px;height:17.90px"></div>
<div class="f" style="left:895.9px;top:282.65px;width:28.00px;height:17.90px"></div>
<div class="f" style="left:923.2px;top:282.65px;width:149.50px;height:17.90px"></div>
<div class="f" style="left:1074.9px;top:282.65px;width:28.10px;height:17.90px"></div>
<div class="f" style="left:1102.3px;top:282.65px;width:140.40px;height:17.90px"></div>
<div class="f" style="left:895.9px;top:314.09999999999997px;width:28.00px;height:17.90px"></div>
<div class="f" style="left:923.2px;top:314.09999999999997px;width:149.50px;height:17.90px"></div>
<div class="f" style="left:1074.9px;top:314.09999999999997px;width:28.10px;height:17.90px"></div>
<div class="f" style="left:1102.3px;top:314.09999999999997px;width:140.40px;height:17.90px"></div>
<div class="f" style="left:895.9px;top:345.54999999999995px;width:28.00px;height:17.90px"></div>
<div class="f" style="left:923.2px;top:345.54999999999995px;width:149.50px;height:17.90px"></div>
<div class="f" style="left:1074.9px;top:345.54999999999995px;width:28.10px;height:17.90px"></div>
<div class="f" style="left:1102.3px;top:345.54999999999995px;width:140.40px;height:17.90px"></div>
<div class="f" style="left:895.9px;top:377.0px;width:28.00px;height:17.90px"></div>
<div class="f" style="left:923.2px;top:377.0px;width:149.50px;height:17.90px"></div>
<div class="f" style="left:1074.9px;top:377.0px;width:28.10px;height:17.90px"></div>
<div class="f" style="left:1102.3px;top:377.0px;width:140.40px;height:17.90px"></div>
<div class="f" style="left:895.9px;top:408.45px;width:28.00px;height:17.90px"></div>
<div class="f" style="left:923.2px;top:408.45px;width:149.50px;height:17.90px"></div>
<div class="f" style="left:1074.9px;top:408.45px;width:28.10px;height:17.90px"></div>
<div class="f" style="left:1102.3px;top:408.45px;width:140.40px;height:17.90px"></div>
<div class="f" style="left:923.2px;top:439.9px;width:149.50px;height:17.90px"></div>
<div class="f" style="left:1074.9px;top:439.9px;width:28.10px;height:17.90px"></div>
<div class="f" style="left:1102.3px;top:439.9px;width:140.40px;height:17.90px"></div>
<div class="f" style="left:895.9px;top:471.35px;width:28.00px;height:17.90px"></div>
<div class="f" style="left:923.2px;top:471.35px;width:149.50px;height:17.90px"></div>
<div class="f" style="left:1074.9px;top:471.35px;width:28.10px;height:17.90px"></div>
<div class="f" style="left:1102.3px;top:471.35px;width:140.40px;height:17.90px"></div>
<div class="f" style="left:895.9px;top:502.79999999999995px;width:28.00px;height:17.90px"></div>
<div class="f" style="left:923.2px;top:502.79999999999995px;width:149.50px;height:17.90px"></div>
<div class="f" style="left:1074.9px;top:502.79999999999995px;width:28.10px;height:17.90px"></div>
<div class="f" style="left:1102.3px;top:502.79999999999995px;width:140.40px;height:17.90px"></div>
<div class="f" style="left:895.9px;top:534.25px;width:28.00px;height:17.90px"></div>
<div class="f" style="left:923.2px;top:534.25px;width:149.50px;height:17.90px"></div>
<div class="f" style="left:1074.9px;top:534.25px;width:28.10px;height:17.90px"></div>
<div class="f" style="left:1102.3px;top:534.25px;width:140.40px;height:17.90px"></div>
<div class="f" style="left:895.9px;top:565.7px;width:28.00px;height:17.90px"></div>
<div class="f" style="left:923.2px;top:565.7px;width:149.50px;height:17.90px"></div>
<div class="f" style="left:1074.9px;top:565.7px;width:28.10px;height:17.90px"></div>
<div class="f" style="left:1102.3px;top:565.7px;width:140.40px;height:17.90px"></div>
<div class="f" style="left:895.9px;top:597.15px;width:28.00px;height:17.90px"></div>
<div class="f" style="left:923.2px;top:597.15px;width:149.50px;height:17.90px"></div>
<div class="f" style="left:1074.9px;top:597.15px;width:28.10px;height:17.90px"></div>
<div class="f" style="left:1102.3px;top:597.15px;width:140.40px;height:17.90px"></div>
<div class="f" style="left:895.9px;top:628.5999999999999px;width:28.00px;height:17.90px"></div>
<div class="f" style="left:923.2px;top:628.5999999999999px;width:149.50px;height:17.90px"></div>
<div class="f" style="left:1074.9px;top:628.5999999999999px;width:28.10px;height:17.90px"></div>
<div class="f" style="left:1102.3px;top:628.5999999999999px;width:140.40px;height:17.90px"></div>
<div class="f" style="left:895.9px;top:660.05px;width:28.00px;height:17.90px"></div>
<div class="f" style="left:923.2px;top:660.05px;width:149.50px;height:17.90px"></div>
<div class="f" style="left:1074.9px;top:660.05px;width:28.10px;height:17.90px"></div>
<div class="f" style="left:1102.3px;top:660.05px;width:140.40px;height:17.90px"></div>
<div class="f" style="left:895.9px;top:691.5px;width:28.00px;height:17.90px"></div>
<div class="f" style="left:923.2px;top:691.5px;width:149.50px;height:17.90px"></div>
<div class="f" style="left:1074.9px;top:691.5px;width:28.10px;height:17.90px"></div>
<div class="f" style="left:1102.3px;top:691.5px;width:140.40px;height:17.90px"></div>
<div class="pt pb" style="left:543.4px;top:275.68px;font-size:9.25px;">E</div>
<div class="pt" style="left:562px;top:275.68px;font-size:9.25px;">Shareholder’s identifying number</div>
<div class="f" style="left:537.4px;top:285.2px;width:355.80px;height:15.20px"></div>
<div class="pt pb" style="left:543.4px;top:306.68px;font-size:9.25px;">F</div>
<div class="pt" style="left:562px;top:306.68px;font-size:9.25px;">Shareholder’s name, address, city, state, and ZIP code</div>
<div class="f" style="left:537.4px;top:316.8px;width:355.80px;height:78.40px"></div>
<div class="pt pb" style="left:542.7px;top:413.68px;font-size:9.25px;">G</div>
<div class="pt" style="left:562px;top:413.68px;font-size:9.25px;">Current year allocation percentage</div>
<div class="dot" style="left:711px;top:420px"></div>
<div class="dot" style="left:727px;top:420px"></div>
<div class="dot" style="left:742px;top:420px"></div>
<div class="f" style="left:763px;top:411.3px;width:105.20px;height:15.30px"></div>
<div class="pl" style="left:763px;top:426.25px;width:123px;height:0.9px;background:#555"></div>
<div class="pt" style="left:876px;top:416.68px;font-size:9.25px;">%</div>
<div class="pt pb" style="left:542.7px;top:448.68px;font-size:9.25px;">H</div>
<div class="pt" style="left:562px;top:448.68px;font-size:9.25px;">Shareholder’s number of shares</div>
<div class="pt" style="left:574.6px;top:462.68px;font-size:9.25px;">Beginning of tax year</div>
<div class="pt" style="left:574.6px;top:478.68px;font-size:9.25px;">End of tax year</div>
<div class="f" style="left:763px;top:458.2px;width:122.80px;height:15.60px"></div>
<div class="f" style="left:763px;top:474.2px;width:122.80px;height:15.40px"></div>
<div class="pl" style="left:763px;top:473.50px;width:123px;height:0.8px;background:#8893ad"></div>
<div class="pl" style="left:763px;top:489.45px;width:123px;height:0.9px;background:#555"></div>
<div class="pt pb" style="left:545.2px;top:510.67px;font-size:9.25px;">I</div>
<div class="pt" style="left:562px;top:510.67px;font-size:9.25px;">Loans from shareholder</div>
<div class="pt" style="left:574.6px;top:525.67px;font-size:9.25px;">Beginning of tax year</div>
<div class="pt" style="left:574.6px;top:540.67px;font-size:9.25px;">End of tax year</div>
<div class="pt" style="left:755.5px;top:525.67px;font-size:9.25px;">$</div>
<div class="pt" style="left:755.5px;top:540.67px;font-size:9.25px;">$</div>
<div class="f" style="left:763px;top:521.1px;width:122.80px;height:15.50px"></div>
<div class="f" style="left:763px;top:537.1px;width:122.80px;height:15.50px"></div>
<div class="pl" style="left:763px;top:536.40px;width:123px;height:0.8px;background:#8893ad"></div>
<div class="pl" style="left:763px;top:552.45px;width:123px;height:0.9px;background:#555"></div>
<div class="dot" style="left:679px;top:469px"></div>
<div class="dot" style="left:695px;top:469px"></div>
<div class="dot" style="left:711px;top:469px"></div>
<div class="dot" style="left:726px;top:469px"></div>
<div class="dot" style="left:742px;top:469px"></div>
<div class="dot" style="left:679px;top:532px"></div>
<div class="dot" style="left:695px;top:532px"></div>
<div class="dot" style="left:711px;top:532px"></div>
<div class="dot" style="left:726px;top:532px"></div>
<div class="dot" style="left:742px;top:532px"></div>
<div class="dot" style="left:648px;top:484px"></div>
<div class="dot" style="left:664px;top:484px"></div>
<div class="dot" style="left:679px;top:484px"></div>
<div class="dot" style="left:695px;top:484px"></div>
<div class="dot" style="left:711px;top:484px"></div>
<div class="dot" style="left:726px;top:484px"></div>
<div class="dot" style="left:742px;top:484px"></div>
<div class="dot" style="left:648px;top:547px"></div>
<div class="dot" style="left:664px;top:547px"></div>
<div class="dot" style="left:679px;top:547px"></div>
<div class="dot" style="left:695px;top:547px"></div>
<div class="dot" style="left:711px;top:547px"></div>
<div class="dot" style="left:726px;top:547px"></div>
<div class="dot" style="left:742px;top:547px"></div>
<div class="pt" style="left:540.8px;top:723.6px;font-size:11.55px;transform:rotate(-90deg);transform-origin:0 0;color:#222">For IRS Use Only</div>
<div class="pt pb" style="left:904px;top:713.67px;font-size:9.25px;">18</div>
<div class="pt pb" style="left:904px;top:729.67px;font-size:9.25px;">19</div>
<div class="f" style="left:922.8px;top:712.4px;width:11.7px;height:10.6px;border-color:#8a97b3;border-radius:0"></div>
<div class="f" style="left:922.8px;top:728.1px;width:11.7px;height:10.6px;border-color:#8a97b3;border-radius:0"></div>
<div class="pt" style="left:942.5px;top:713.67px;font-size:9.25px;">More than one activity for at-risk purposes*</div>
<div class="pt" style="left:942.5px;top:729.67px;font-size:9.25px;">More than one activity for passive activity purposes*</div>
<div class="pt" style="left:933.8px;top:757.32px;font-size:11.95px;">* See attached statement for additional information.</div>
<div class="pt pb" style="left:537px;top:794.69px;font-size:9.22px;">For Paperwork Reduction Act Notice, see the Instructions for Form 1120-S.</div>
<div class="pt" style="left:877px;top:794.02px;font-size:9.55px;">www.irs.gov/Form1120S</div>
<div class="pt" style="left:1007px;top:794.63px;font-size:9.33px;">Cat. No. 11520D</div>
<div class="pt pb" style="left:1098.8px;top:794.69px;font-size:9.22px;">Schedule K-1 (Form 1120-S) 2021</div>
</div></div>
</div></div>
</body></html>
